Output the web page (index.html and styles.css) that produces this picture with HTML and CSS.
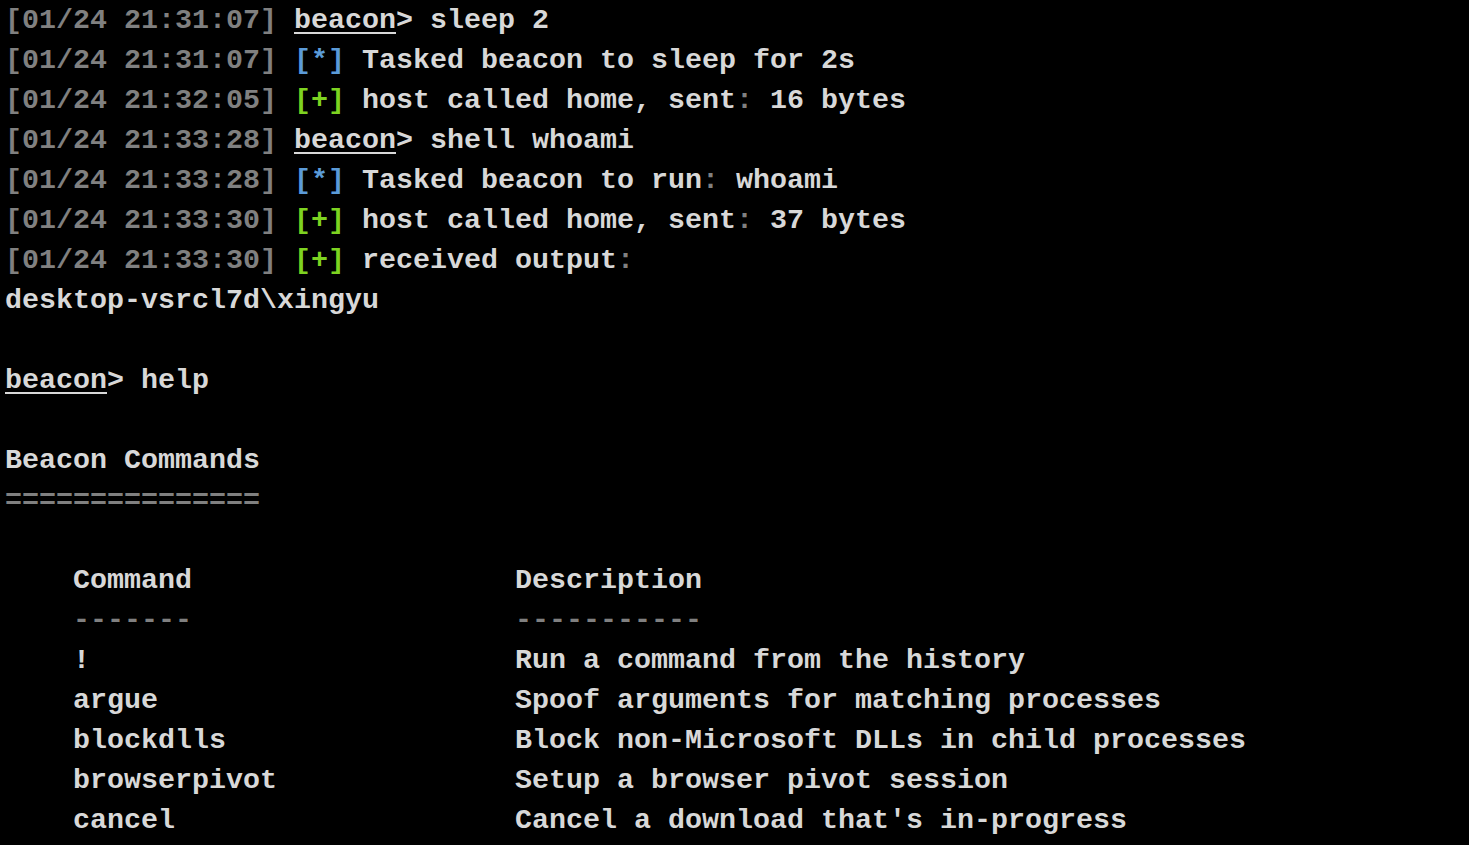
FILE: index.html
```html
<!DOCTYPE html>
<html>
<head>
<meta charset="utf-8">
<link rel="stylesheet" href="styles.css">
</head>
<body>
<div class="term">
<div class="line"><span class="ts">[01/24 21:31:07]</span> <span class="prompt">beacon</span>&gt; sleep 2</div>
<div class="line"><span class="ts">[01/24 21:31:07]</span> <span class="info">[*]</span> Tasked beacon to sleep for 2s</div>
<div class="line"><span class="ts">[01/24 21:32:05]</span> <span class="ok">[+]</span> host called home, sent<span class="dim">:</span> 16 bytes</div>
<div class="line"><span class="ts">[01/24 21:33:28]</span> <span class="prompt">beacon</span>&gt; shell whoami</div>
<div class="line"><span class="ts">[01/24 21:33:28]</span> <span class="info">[*]</span> Tasked beacon to run<span class="dim">:</span> whoami</div>
<div class="line"><span class="ts">[01/24 21:33:30]</span> <span class="ok">[+]</span> host called home, sent<span class="dim">:</span> 37 bytes</div>
<div class="line"><span class="ts">[01/24 21:33:30]</span> <span class="ok">[+]</span> received output<span class="dim">:</span></div>
<div class="line">desktop-vsrcl7d\xingyu</div>
<div class="line"> </div>
<div class="line"><span class="prompt">beacon</span>&gt; help</div>
<div class="line"> </div>
<div class="line">Beacon Commands</div>
<div class="line"><span class="dim">===============</span></div>
<div class="line"> </div>
<div class="line">    Command                   Description</div>
<div class="line">    <span class="dim">-------</span>                   <span class="dim">-----------</span></div>
<div class="line">    !                         Run a command from the history</div>
<div class="line">    argue                     Spoof arguments for matching processes</div>
<div class="line">    blockdlls                 Block non-Microsoft DLLs in child processes</div>
<div class="line">    browserpivot              Setup a browser pivot session</div>
<div class="line">    cancel                    Cancel a download that's in-progress</div>
</div>
</body>
</html>
```
FILE: styles.css
```css
html, body {
  margin: 0;
  padding: 0;
  background: #000;
}
.term {
  background: #000;
  color: #d8d8d8;
  font-family: "Liberation Mono", "Courier New", monospace;
  font-weight: bold;
  font-size: 28.33px;
  line-height: 40px;
  padding: 1px 0 0 5px;
  height: 844px;
  overflow: hidden;
}
.line {
  white-space: pre;
  height: 40px;
}
.ts, .dim {
  color: #808080;
}
.prompt {
  text-decoration: underline;
  text-underline-offset: 4px;
  text-decoration-thickness: 2px;
}
.info {
  color: #5b9bd8;
}
.ok {
  color: #7ed321;
}
```
